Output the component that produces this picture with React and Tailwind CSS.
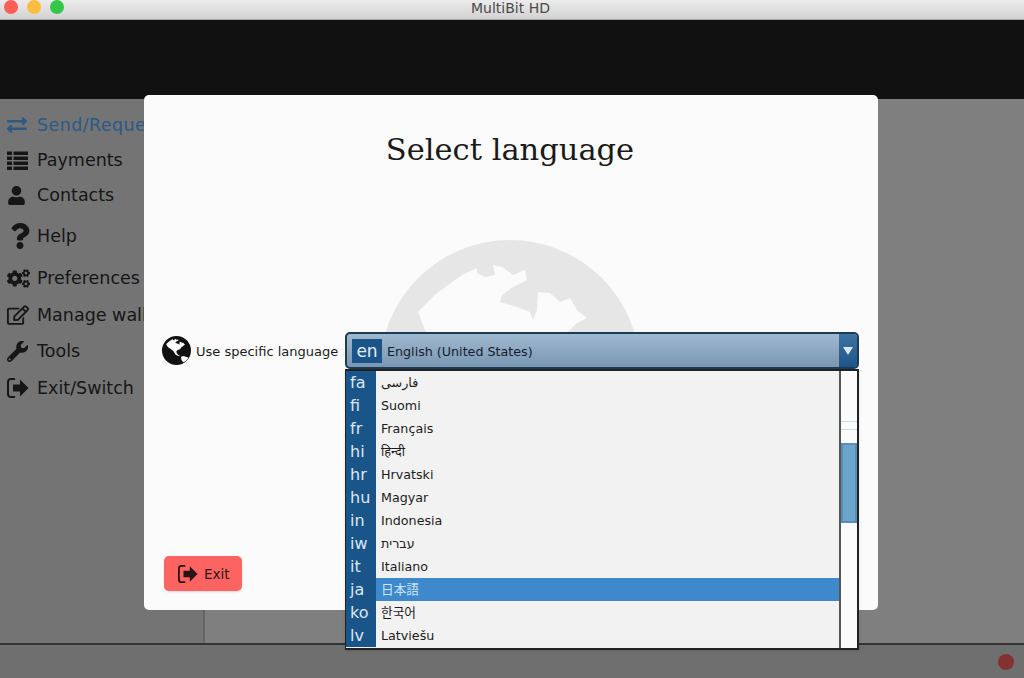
import React from 'react';
import {
  FaExchangeAlt,
  FaUser,
  FaQuestion,
  FaCogs,
  FaRegEdit,
  FaWrench,
} from 'react-icons/fa';

const uiFont = "font-['DejaVu_Sans','Noto_Sans','Noto_Sans_CJK_JP',sans-serif]";

function ListIcon({ size }) {
  return (
    <svg width={size} height={size} viewBox="0 0 21 21" fill="currentColor">
      {[1.5, 6.5, 11.5, 16.5].map((y) => (
        <g key={y}>
          <rect x="0" y={y} width="5" height="3.5" />
          <rect x="6.5" y={y} width="14.5" height="3.5" />
        </g>
      ))}
    </svg>
  );
}

function ExitIcon({ size }) {
  return (
    <svg width={size} height={size} viewBox="0 0 22 20" fill="currentColor">
      <path d="M8 1H4a3 3 0 0 0-3 3v12a3 3 0 0 0 3 3h4" fill="none" stroke="currentColor" strokeWidth="2" />
      <path d="M6 6.5h7V1.5l8.5 8.5-8.5 8.5v-5H6z" />
    </svg>
  );
}

// same globe as the small one, land is left open in the disc
function GlobeIcon({ size, className, land }) {
  return (
    <svg width={size} height={size} viewBox="0 0 260 260" className={className}>
      <circle cx="130" cy="130" r="130" fill="currentColor" />
      <path
        fill={land}
        d="M38 72 57 53 82 35 97 28 97 33 105 37 115 35 113 25 122 27 133 35 145 30 147 40 133 47 122 55 120 62 137 67 150 72 153 80 157 70 158 52 170 53 180 62 190 58 197 70 207 78 197 83 190 90 175 100 160 118 140 125 128 140 135 160 150 172 165 178 145 180 120 165 105 140 85 120 60 105 45 90Z"
      />
      <path fill={land} d="M170 185 195 180 225 190 240 195 215 225 190 235 175 215Z" />
    </svg>
  );
}

const sidebarItems = [
  { label: 'Send/Request', icon: FaExchangeAlt, gap: 'mt-0', iconSize: 20, color: 'text-[#2b5a85] tracking-[0.4px]' },
  { label: 'Payments', icon: ListIcon, gap: 'mt-[11px]', iconSize: 21 },
  { label: 'Contacts', icon: FaUser, gap: 'mt-[11px]', iconSize: 19 },
  { label: 'Help', icon: FaQuestion, gap: 'mt-[17px]', iconSize: 26 },
  { label: 'Preferences', icon: FaCogs, gap: 'mt-[18px]', iconSize: 23 },
  { label: 'Manage wallet', icon: FaRegEdit, gap: 'mt-[13px]', iconSize: 22 },
  { label: 'Tools', icon: FaWrench, gap: 'mt-[12px]', iconSize: 21 },
  { label: 'Exit/Switch', icon: ExitIcon, gap: 'mt-[13px]', iconSize: 22 },
];

const languages = [
  { code: 'fa', name: 'فارسی' },
  { code: 'fi', name: 'Suomi' },
  { code: 'fr', name: 'Français' },
  { code: 'hi', name: 'हिन्दी' },
  { code: 'hr', name: 'Hrvatski' },
  { code: 'hu', name: 'Magyar' },
  { code: 'in', name: 'Indonesia' },
  { code: 'iw', name: 'עברית' },
  { code: 'it', name: 'Italiano' },
  { code: 'ja', name: '日本語', selected: true },
  { code: 'ko', name: '한국어' },
  { code: 'lv', name: 'Latviešu' },
];

function TitleBar() {
  return (
    <div className="relative h-[20px] shrink-0 flex items-start gap-[9px] pl-1 bg-gradient-to-b from-[#ececec] to-[#d2d2d2] border-b border-[#a8a8a8]">
      <span className="w-3.5 h-3.5 rounded-full bg-[#fc5f5a]" />
      <span className="w-3.5 h-3.5 rounded-full bg-[#fdbc40]" />
      <span className="w-3.5 h-3.5 rounded-full bg-[#33c748]" />
      <span className="absolute inset-x-0 -top-px pr-[3px] text-center text-[14px] leading-[18px] text-[#4a4a4a]">
        MultiBit HD
      </span>
    </div>
  );
}

function Sidebar() {
  return (
    <div className="w-[205px] shrink-0 pt-[14px] bg-[#747474] border-r-2 border-[#666666]">
      {sidebarItems.map((item) => {
        const Icon = item.icon;
        return (
          <div
            key={item.label}
            className={`flex items-center h-6 ${item.gap} ${item.color || 'text-[#161616]'}`}
          >
            <span className="w-[37px] shrink-0 pl-[7px]">
              <Icon size={item.iconSize} />
            </span>
            <span className="text-[17.5px] whitespace-nowrap">{item.label}</span>
          </div>
        );
      })}
    </div>
  );
}

function LanguagePopup() {
  return (
    <div className="absolute left-[201px] top-[274px] w-[514px] h-[281px] flex border-2 border-[#222222] border-l-[1.5px] bg-[#f2f2f2] shadow-sm">
      <div className="flex-1">
        {languages.map((lang) => (
          <div
            key={lang.code}
            className={`flex items-center h-[23px] ${lang.selected ? 'bg-[#3e89cb] text-[#cfe3f5]' : 'text-[#1c1c1c]'}`}
          >
            <span className="w-[30px] h-full shrink-0 pl-1 bg-[#1a5589] text-[16px] leading-[23px] text-[#dbe7f2]">
              {lang.code}
            </span>
            <span className="pl-[5px] text-[12.7px]">{lang.name}</span>
          </div>
        ))}
      </div>
      <div className="relative w-[18px] shrink-0 bg-[#fbfbfb] border-l-2 border-[#555555]">
        <div className="absolute inset-x-0 top-[50px] h-[9px] border-y border-[#c8dcea]" />
        <div className="absolute inset-x-0 top-[72px] h-[80px] bg-[#6da4cb] border-2 border-[#5a8fb5]" />
      </div>
    </div>
  );
}

function LanguageRow() {
  return (
    <div className="flex items-center justify-between mt-[149px] pl-[18px] pr-[19px]">
      <div className="flex items-center gap-[5px]">
        <GlobeIcon size={29} land="#fbfbfb" className="text-[#111111]" />
        <span className="pt-[3px] text-[13px] text-[#1c1c1c] whitespace-nowrap">Use specific language</span>
      </div>
      <div className="relative flex items-center w-[514px] h-[37px] rounded-[5px] border-2 border-[#1b3b57] bg-gradient-to-b from-[#a0b9cf] to-[#7a96b2]">
        <span className="ml-[5px] w-[30px] h-6 shrink-0 bg-[#1a5589] text-center text-[17px] leading-[25px] text-[#e4edf5]">
          en
        </span>
        <span className="ml-[5px] pt-[3px] flex-1 text-[12.7px] text-[#14202c]">English (United States)</span>
        <span className="w-[18px] h-full shrink-0 flex items-center justify-center rounded-r-[3px] bg-gradient-to-b from-[#3f72a1] to-[#1d5488]">
          <svg width="10" height="8" viewBox="0 0 10 8">
            <path d="M0 0h10L5 8z" fill="#d6e6f4" />
          </svg>
        </span>
      </div>
    </div>
  );
}

function LanguageDialog() {
  return (
    <div className="absolute left-[144px] top-[95px] w-[734px] h-[515px] flex flex-col rounded-[5px] bg-[#fbfbfb]">
      <GlobeIcon size={260} land="#fbfbfb" className="absolute left-[236px] top-[145px] text-[#e6e6e6]" />
      <h1 className="relative h-[88px] pt-[33px] pr-[2px] text-center font-['DejaVu_Serif',serif] text-[30.5px] leading-[44px] text-[#1a1a1a]">
        Select language
      </h1>
      <div className="relative">
        <LanguageRow />
      </div>
      <button className="relative mt-auto mb-[19px] ml-5 w-[78px] h-[35px] flex items-center pl-[14px] gap-[6px] rounded-[5px] bg-[#fd6461] text-[13.5px] text-[#2a1514] shadow-sm">
        <ExitIcon size={20} />
        <span className="pt-px">Exit</span>
      </button>
      <LanguagePopup />
    </div>
  );
}

export default function App() {
  return (
    <div className={`relative w-[1024px] h-[678px] overflow-hidden flex flex-col bg-[#7f7f7f] ${uiFont}`}>
      <TitleBar />
      <div className="h-[79px] shrink-0 bg-[#111111]" />
      <div className="flex flex-1 min-h-0">
        <Sidebar />
        <div className="flex-1 bg-[#7f7f7f]" />
      </div>
      <div className="relative h-[35px] shrink-0 flex items-center justify-end pr-[10px] bg-[#6f6f6f] border-t-2 border-[#333333]">
        <span className="w-4 h-4 rounded-full bg-[#843230]" />
      </div>
      <LanguageDialog />
    </div>
  );
}
